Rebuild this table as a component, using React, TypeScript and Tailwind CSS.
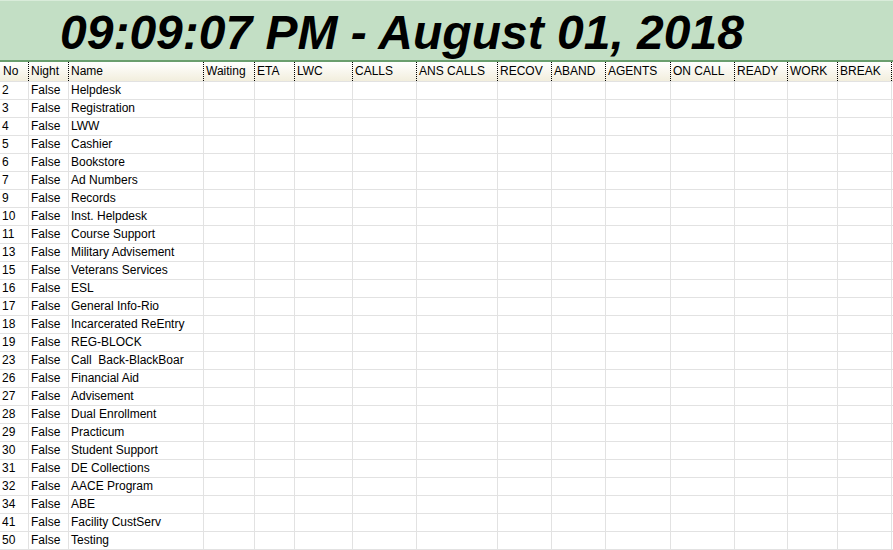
const columns = [
  'No', 'Night', 'Name', 'Waiting', 'ETA', 'LWC', 'CALLS', 'ANS CALLS',
  'RECOV', 'ABAND', 'AGENTS', 'ON CALL', 'READY', 'WORK', 'BREAK',
];

const queues: [number, string][] = [
  [2, 'Helpdesk'],
  [3, 'Registration'],
  [4, 'LWW'],
  [5, 'Cashier'],
  [6, 'Bookstore'],
  [7, 'Ad Numbers'],
  [9, 'Records'],
  [10, 'Inst. Helpdesk'],
  [11, 'Course Support'],
  [13, 'Military Advisement'],
  [15, 'Veterans Services'],
  [16, 'ESL'],
  [17, 'General Info-Rio'],
  [18, 'Incarcerated ReEntry'],
  [19, 'REG-BLOCK'],
  [23, 'Call  Back-BlackBoar'],
  [26, 'Financial Aid'],
  [27, 'Advisement'],
  [28, 'Dual Enrollment'],
  [29, 'Practicum'],
  [30, 'Student Support'],
  [31, 'DE Collections'],
  [32, 'AACE Program'],
  [34, 'ABE'],
  [41, 'Facility CustServ'],
  [50, 'Testing'],
];

const grid =
  'grid pl-px grid-cols-[28px_40px_135px_51px_40px_58px_64px_81px_54px_54px_65px_64px_53px_50px_54px]';

export default function App() {
  return (
    <div className="w-[893px] h-[550px] overflow-hidden bg-white font-['Liberation_Sans',Arial,sans-serif] text-[12px] text-black">
      {/* clock banner */}
      <div className="h-[62px] bg-[#c3dfc5] border-t border-[#d9ecda] border-b-2 border-b-[#6a9e6e] pl-[60px] flex items-center">
        <span className="text-[48px] leading-none font-bold italic pt-[4px]">
          09:09:07 PM - August 01, 2018
        </span>
      </div>

      {/* header row */}
      <div className={`${grid} h-[20px] bg-gradient-to-b from-white to-[#f2eedd] border-b border-[#e2e2e2]`}>
        {columns.map((c) => (
          <div
            key={c}
            className="border-r border-dotted border-black pl-[2px] leading-[19px] whitespace-nowrap overflow-hidden"
          >
            {c}
          </div>
        ))}
      </div>

      {/* data rows */}
      {queues.map(([no, name]) => (
        <div key={no} className={`${grid} h-[18px] border-b border-[#e2e2e2]`}>
          <div className="border-r border-[#e2e2e2] pl-[1px] leading-[17px]">{no}</div>
          <div className="border-r border-[#e2e2e2] pl-[2px] leading-[17px]">False</div>
          <div className="border-r border-[#e2e2e2] pl-[2px] leading-[17px] whitespace-pre overflow-hidden">{name}</div>
          {columns.slice(3).map((c) => (
            <div key={c} className="border-r border-[#e2e2e2]" />
          ))}
        </div>
      ))}
    </div>
  );
}
